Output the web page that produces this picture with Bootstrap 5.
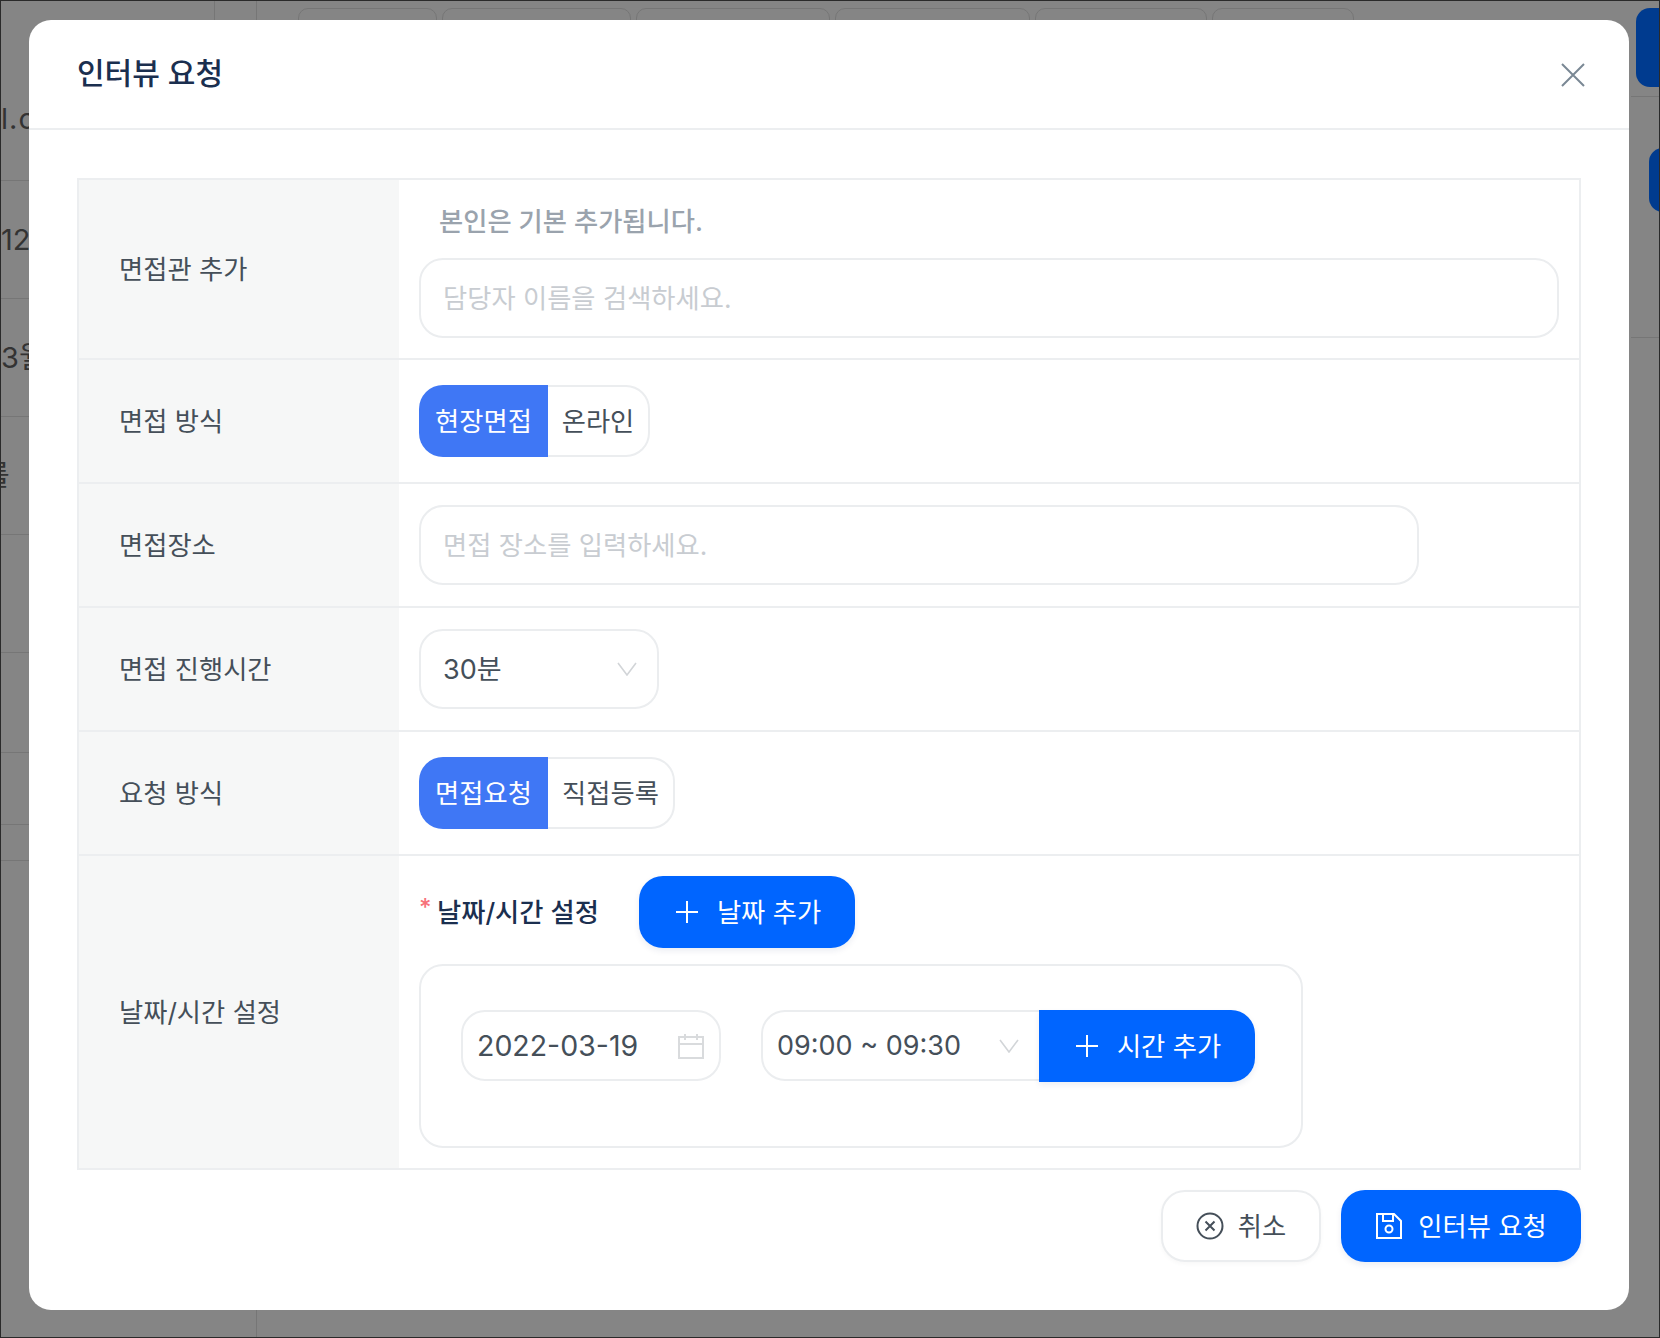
<!DOCTYPE html>
<html lang="ko">
<head>
    <meta charset="UTF-8">
    <title>인터뷰 요청</title>
    <link href="https://cdn.jsdelivr.net/npm/bootstrap@5.3.2/dist/css/bootstrap.min.css" rel="stylesheet">
    <style>
        html, body { margin: 0; height: 1338px; overflow: hidden; }
        body {
            font-family: Inter, "Noto Sans CJK KR", sans-serif;
            font-size: 26.3px;
            color: #454f59;
            background: #858585;
        }
        /* page behind the dimmed backdrop */
        .under-page { position: relative; height: 1338px; border: 1px solid #2a2a2a; overflow: hidden; color: #333; }
        .under-rows { width: 213px; }
        .under-row { border-bottom: 1px solid #767676; font-size: 29px; height: 118px; white-space: nowrap; overflow: hidden; }
        .under-row.first { height: 180px; padding-top: 56px; letter-spacing: 1px; }
        .under-row.clip { text-indent: -18px; }
        .under-row.h100 { height: 100px; }
        .under-row.h72 { height: 72px; }
        .under-row.h36 { height: 36px; }
        .under-gap { width: 43px; border-right: 1px solid #767676; }
        .under-gap-line { width: 1px; height: 20px; background: #767676; }
        .under-tabs { padding: 7px 0 0 41px; gap: 5px; height: 40px; }
        .under-tab { height: 40px; border: 1px solid #767676; border-radius: 10px; width: 139px; }
        .under-tab:nth-child(2) { width: 189px; }
        .under-tab:nth-child(3) { width: 194px; }
        .under-tab:nth-child(4) { width: 195px; }
        .under-tab:nth-child(5) { width: 172px; }
        .under-tab:nth-child(6) { width: 142px; }
        .under-right { width: 28px; margin-left: auto; }
        .under-side { padding-left: 5px; padding-top: 7px; height: 96px; border-bottom: 1px solid #767676; }
        .under-side.second { height: 241px; padding-left: 18px; padding-top: 51px; }
        .under-btn { width: 50px; height: 79px; border-radius: 14px; background: #003b8f; }
        .second .under-btn { height: 64px; }

        /* modal */
        .ivw-modal {
            position: absolute; left: 28px; top: 19px; width: 1600px;
            border: 0; border-radius: 22px; background: #fff; color: #454f59;
        }
        .ivw-header { height: 110px; padding: 0 44px 0 48px; border-bottom: 2px solid #eceef0; }
        .ivw-title { font-size: 30px; font-weight: 500; color: #1b2f4f; margin: 0 0 2px; line-height: 1.5; }
        .ivw-close { background: none; border: 0; padding: 0; line-height: 0; margin-top: 2px; }
        .ivw-body { padding: 48px 48px 48px; }
        .ivw-table { border: 2px solid #eceef0; }
        .ivw-row { border-bottom: 2px solid #eceef0; min-height: 124px; }
        .ivw-row:last-child { border-bottom: 0; }
        .ivw-label { width: 320px; flex: none; background: #f6f7f7; padding: 2px 0 0 40px; color: #454f59; }
        .ivw-cell { padding: 20px; flex: 1; min-width: 0; }
        .ivw-note { color: #9aa3ad; font-weight: 500; line-height: 40px; padding: 2px 0 16px 20px; }
        .ivw-input.form-control {
            height: 80px; font-size: 26.3px; border: 2px solid #ebedef; border-radius: 24px;
            padding: 0 22px; color: #454f59; box-shadow: none;
        }
        .ivw-input.form-control::placeholder { color: #c8ccd1; }
        .place-input { width: 1000px; }
        .ivw-select.form-select {
            height: 80px; font-size: 27px; border: 2px solid #ebedef; border-radius: 24px; color: #454f59;
            padding: 2px 50px 0 22px; box-shadow: none;
            background-image: url("data:image/svg+xml,%3Csvg xmlns='http://www.w3.org/2000/svg' viewBox='0 0 20 14'%3E%3Cpath d='M1 1l9 12 9-12' fill='none' stroke='%23d2d5d8' stroke-width='1.6'/%3E%3C/svg%3E");
            background-size: 20px 14px; background-position: right 20px center;
        }
        .duration-select { width: 240px; }
        .seg-btn.btn {
            height: 72px; font-size: 26.3px; padding: 2px 0 0; background: #fff; color: #454f59;
            border: 2px solid #ebedef; border-left: 0; border-radius: 0 24px 24px 0;
            margin-left: 0 !important;
        }
        .seg-btn.seg-on.btn {
            background: #3f77f5; color: #fff; border: 0; border-radius: 24px 0 0 24px; width: 129px;
        }
        .seg-a { width: 102px; }
        .seg-b { width: 127px; }
        .date-head { margin-bottom: 16px; }
        .date-star { color: #f7717a; font-size: 24px; font-weight: 500; width: 18px; line-height: 1; margin-top: -8px; }
        .date-title { color: #1b2f4f; font-weight: 500; width: 202px; padding-top: 2px; }
        .blue-btn.btn {
            height: 72px; font-size: 26.3px; color: #fff; background: #0065ff; border: 0; border-radius: 24px;
            box-shadow: 0 3px 6px rgba(0, 40, 100, .08); padding: 2px 0 0 3px;
        }
        .blue-btn svg { margin-top: -2px; }
        .add-date { width: 216px; gap: 19px; }
        .date-box { border: 2px solid #ebedef; border-radius: 24px; width: 884px; height: 184px; padding: 44px 0 0 40px; gap: 40px; }
        .date-field { width: 260px; height: 71px; border: 2px solid #ebedef; border-radius: 24px; padding: 0 15px 0 14px; }
        .date-field .form-control { font-size: 28.5px; color: #454f59; padding: 2px 0 0; box-shadow: none; background: transparent; }
        .time-group { width: 494px; }
        .time-group .ivw-select.form-select { height: 71px; width: 278px; flex: none; border-radius: 24px 0 0 24px; border-right: 0; padding-left: 14px; }
        .add-time.blue-btn.btn { width: 216px; gap: 19px; border-radius: 0 24px 24px 0 !important; margin-left: 0 !important; }
        .ivw-footer { padding-top: 20px; gap: 20px; }
        .cancel-btn.btn {
            width: 160px; height: 72px; font-size: 26.3px; color: #454f59; background: #fff;
            border: 2px solid #ebedef; border-radius: 24px; gap: 14px; padding: 2px 0 0;
            box-shadow: 0 2px 4px rgba(0, 0, 0, .03);
        }
        .cancel-btn svg { margin-top: -2px; }
        .save-btn.blue-btn.btn { width: 240px; gap: 16px; padding-left: 1px; }
    </style>
</head>
<body>

    <!-- page behind the backdrop, only its edges show -->
    <div class="under-page d-flex" aria-hidden="true">
        <div class="under-rows">
            <div class="under-row first d-flex align-items-center">l.c</div>
            <div class="under-row d-flex align-items-center">12</div>
            <div class="under-row d-flex align-items-center">3월</div>
            <div class="under-row clip d-flex align-items-center">를</div>
            <div class="under-row"></div>
            <div class="under-row h100"></div>
            <div class="under-row h72"></div>
            <div class="under-row h36"></div>
        </div>
        <div class="under-gap"><div class="under-gap-line"></div></div>
        <div class="under-tabs d-flex">
            <div class="under-tab"></div>
            <div class="under-tab"></div>
            <div class="under-tab"></div>
            <div class="under-tab"></div>
            <div class="under-tab"></div>
            <div class="under-tab"></div>
        </div>
        <div class="under-right">
            <div class="under-side"><div class="under-btn"></div></div>
            <div class="under-side second"><div class="under-btn"></div></div>
        </div>

        <div class="modal-content ivw-modal">
            <div class="modal-header ivw-header d-flex align-items-center justify-content-between">
                <h5 class="ivw-title">인터뷰 요청</h5>
                <button type="button" class="ivw-close" aria-label="닫기">
                    <svg width="24" height="24" viewBox="0 0 24 24" fill="none" stroke="#7a8894" stroke-width="2"><path d="M1 1l22 22M23 1L1 23"/></svg>
                </button>
            </div>
            <div class="modal-body ivw-body">
                <div class="ivw-table">
                    <div class="ivw-row d-flex">
                        <div class="ivw-label d-flex align-items-center">면접관 추가</div>
                        <div class="ivw-cell">
                            <div class="ivw-note">본인은 기본 추가됩니다.</div>
                            <input type="text" class="form-control ivw-input" placeholder="담당자 이름을 검색하세요.">
                        </div>
                    </div>
                    <div class="ivw-row d-flex">
                        <div class="ivw-label d-flex align-items-center">면접 방식</div>
                        <div class="ivw-cell d-flex align-items-center">
                            <div class="btn-group">
                                <button type="button" class="btn seg-btn seg-on">현장면접</button>
                                <button type="button" class="btn seg-btn seg-a">온라인</button>
                            </div>
                        </div>
                    </div>
                    <div class="ivw-row d-flex">
                        <div class="ivw-label d-flex align-items-center">면접장소</div>
                        <div class="ivw-cell d-flex align-items-center">
                            <input type="text" class="form-control ivw-input place-input" placeholder="면접 장소를 입력하세요.">
                        </div>
                    </div>
                    <div class="ivw-row d-flex">
                        <div class="ivw-label d-flex align-items-center">면접 진행시간</div>
                        <div class="ivw-cell d-flex align-items-center">
                            <select class="form-select ivw-select duration-select"><option>30분</option></select>
                        </div>
                    </div>
                    <div class="ivw-row d-flex">
                        <div class="ivw-label d-flex align-items-center">요청 방식</div>
                        <div class="ivw-cell d-flex align-items-center">
                            <div class="btn-group">
                                <button type="button" class="btn seg-btn seg-on">면접요청</button>
                                <button type="button" class="btn seg-btn seg-b">직접등록</button>
                            </div>
                        </div>
                    </div>
                    <div class="ivw-row d-flex">
                        <div class="ivw-label d-flex align-items-center">날짜/시간 설정</div>
                        <div class="ivw-cell">
                            <div class="date-head d-flex align-items-center">
                                <span class="date-star">*</span>
                                <span class="date-title">날짜/시간 설정</span>
                                <button type="button" class="btn blue-btn add-date d-flex align-items-center justify-content-center">
                                    <svg width="22" height="22" viewBox="0 0 22 22" stroke="#fff" stroke-width="2"><path d="M11 0v22M0 11h22"/></svg>
                                    날짜 추가
                                </button>
                            </div>
                            <div class="date-box d-flex align-items-start">
                                <div class="date-field d-flex align-items-center">
                                    <input type="text" class="form-control border-0" value="2022-03-19" readonly>
                                    <svg class="flex-shrink-0" width="26" height="26" viewBox="0 0 26 26" fill="none" stroke="#d9dbdd" stroke-width="2"><path d="M1 4h24v21H1zM1 11h24M7 1v6M19 1v6"/></svg>
                                </div>
                                <div class="input-group time-group flex-nowrap">
                                    <select class="form-select ivw-select"><option>09:00 ~ 09:30</option></select>
                                    <button type="button" class="btn blue-btn add-time d-flex align-items-center justify-content-center">
                                        <svg width="22" height="22" viewBox="0 0 22 22" stroke="#fff" stroke-width="2"><path d="M11 0v22M0 11h22"/></svg>
                                        시간 추가
                                    </button>
                                </div>
                            </div>
                        </div>
                    </div>
                </div>
                <div class="ivw-footer d-flex justify-content-end">
                    <button type="button" class="btn cancel-btn d-flex align-items-center justify-content-center">
                        <svg width="28" height="28" viewBox="0 0 28 28" fill="none" stroke="#454f59" stroke-width="2"><circle cx="14" cy="14" r="12.5"/><path d="M9.5 9.5l9 9M18.5 9.5l-9 9"/></svg>
                        취소
                    </button>
                    <button type="button" class="btn blue-btn save-btn d-flex align-items-center justify-content-center">
                        <svg width="26" height="26" viewBox="0 0 26 26" fill="none" stroke="#fff" stroke-width="2"><path d="M1 1h17l7 7v17H1zM7 1v7h10V1"/><circle cx="13" cy="16" r="3.5"/></svg>
                        인터뷰 요청
                    </button>
                </div>
            </div>
        </div>
    </div>

    <script src="https://cdn.jsdelivr.net/npm/bootstrap@5.3.2/dist/js/bootstrap.bundle.min.js"></script>
</body>
</html>
